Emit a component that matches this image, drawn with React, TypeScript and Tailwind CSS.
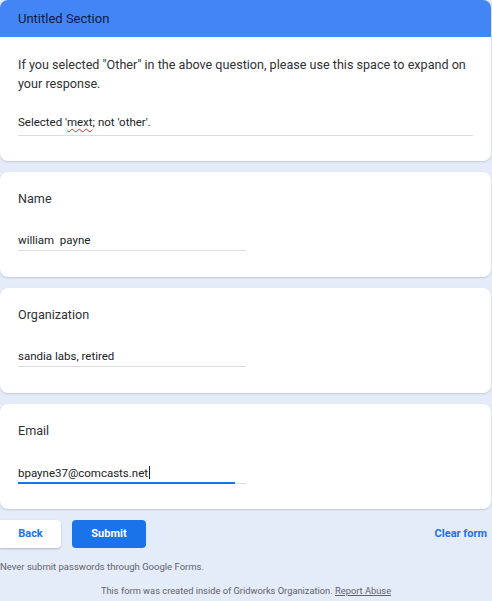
export default function App() {
  return (
    <div className="min-h-[601px] w-[492px] bg-[#e4ecfa] font-['Roboto',sans-serif] text-[#202124]">
      {/* Section card */}
      <div className="w-[491px] overflow-hidden rounded-lg bg-white shadow-[0_1px_2px_rgba(60,64,67,0.2)]">
        <div className="flex h-[37px] items-center bg-[#4285f4] px-[18px] text-[13px] text-[#0d1b3e]">
          Untitled Section
        </div>
        <div className="px-[18px] pb-[25px] pt-[18px]">
          <p className="text-[12.6px] leading-[19px] text-[#303134]">
            If you selected "Other" in the above question, please use this space to expand on your response.
          </p>
          <div className="mt-[21px] border-b border-[#dadce0] pb-[5px] text-[11.5px] leading-[16px]">
            Selected '<span className="underline decoration-[#d93025] decoration-wavy decoration-1 underline-offset-2">mext</span>; not 'other'.
          </div>
        </div>
      </div>

      <Question label="Name" value="william  payne" />
      <Question label="Organization" value="sandia labs, retired" />
      <Question label="Email" value="bpayne37@comcasts.net" active />

      <div className="mt-[11px] flex items-center justify-between pr-[5px]">
        <div className="flex items-center gap-[11px]">
          <button className="h-[28px] w-[61px] rounded-r-[4px] bg-white text-[11px] font-bold text-[#1a73e8] shadow-[0_1px_2px_rgba(60,64,67,0.3)]">
            Back
          </button>
          <button className="h-[28px] w-[74px] rounded-[4px] bg-[#1a73e8] text-[11px] font-bold text-white">
            Submit
          </button>
        </div>
        <span className="text-[11px] font-bold text-[#1a73e8]">Clear form</span>
      </div>

      <p className="mt-[13px] text-[9.5px] leading-[12px] text-[#5f6368]">
        Never submit passwords through Google Forms.
      </p>
      <p className="mt-[12px] pb-[5px] text-center text-[9.3px] leading-[12px] text-[#5f6368]">
        This form was created inside of Gridworks Organization. <span className="underline">Report Abuse</span>
      </p>
    </div>
  );
}

function Question({ label, value, active }: { label: string; value: string; active?: boolean }) {
  return (
    <div className="mt-[11px] h-[105px] w-[491px] rounded-lg bg-white px-[18px] pt-[17px] shadow-[0_1px_2px_rgba(60,64,67,0.2)]">
      <div className="text-[12.6px] leading-[19px] text-[#303134]">{label}</div>
      <div className="relative mt-[24px] w-[228px]">
        <div className="whitespace-pre pb-[2px] text-[11.5px] leading-[16px]">
          {value}
          {active && <span className="ml-[1px] inline-block h-[13px] w-px translate-y-[2px] bg-[#202124]" />}
        </div>
        <div className="h-px bg-[#dadce0]" />
        {active && <div className="absolute bottom-0 left-0 h-[2px] w-[217px] bg-[#1a73e8]" />}
      </div>
    </div>
  );
}
